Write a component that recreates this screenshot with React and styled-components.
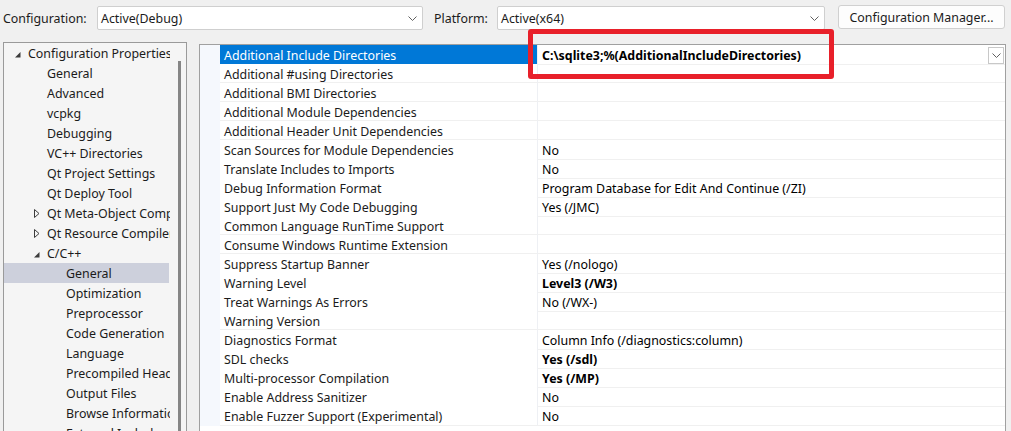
import styled, { createGlobalStyle } from "styled-components";

const GlobalStyle = createGlobalStyle`
  html, body {
    margin: 0;
    padding: 0;
    background: #f0f0f0;
  }
  body {
    font-family: "Noto Sans", "Open Sans", sans-serif;
    font-size: 12.4px;
    color: #1b1b1b;
  }
`;

const Page = styled.div`
  position: relative;
  width: 1011px;
  height: 431px;
  overflow: hidden;
  display: flex;
  flex-direction: column;
  background: #f0f0f0;
`;

const Toolbar = styled.div`
  height: 36px;
  display: flex;
  align-items: center;
  padding-left: 3px;
  flex-shrink: 0;
`;

const Label = styled.span`
  width: ${(p) => p.$width}px;
  flex-shrink: 0;
  white-space: nowrap;
  margin-left: ${(p) => p.$offset || 0}px;
`;

const Combo = styled.div`
  width: ${(p) => p.$width}px;
  height: 24px;
  box-sizing: border-box;
  display: flex;
  align-items: center;
  justify-content: space-between;
  padding: 0 5px 0 3px;
  background: #fff;
  border: 1px solid #cfcfcf;
  border-radius: 2px;
  flex-shrink: 0;
`;

const ToolButton = styled.button`
  margin-left: 13px;
  width: 167px;
  height: 24px;
  margin-top: -2px;
  background: #fdfdfd;
  border: 1px solid #d0d0d0;
  border-radius: 3px;
  font: inherit;
  color: inherit;
  padding: 0;
`;

const Body = styled.div`
  flex: 1;
  min-height: 0;
  display: flex;
  align-items: flex-start;
  padding-top: 6px;
`;

const TreePanel = styled.div`
  margin-left: 3px;
  width: 184px;
  height: 400px;
  box-sizing: border-box;
  border: 1px solid #9a9a9a;
  border-bottom: none;
  background: #f5f5f5;
  display: flex;
`;

const TreeList = styled.div`
  flex: 1;
  min-width: 0;
  overflow: hidden;
`;

const TreeRow = styled.div`
  height: 20px;
  display: flex;
  align-items: center;
  padding-left: ${(p) => 11 + p.$level * 19}px;
  white-space: nowrap;
  margin-right: 1px;
  background: ${(p) => (p.$selected ? "#cdd0dc" : "transparent")};
`;

const Twisty = styled.span`
  width: 13px;
  flex-shrink: 0;
  display: flex;
  align-items: center;
`;

const ScrollTrack = styled.div`
  width: 16px;
  flex-shrink: 0;
  display: flex;
  justify-content: center;
  padding-top: 18px;
  box-sizing: border-box;
`;

const ScrollThumb = styled.div`
  width: 3px;
  height: 100%;
  margin-left: 2px;
  background: #868686;
`;

const Grid = styled.div`
  margin-left: 12px;
  margin-top: 2px;
  width: 807px;
  height: 400px;
  box-sizing: border-box;
  border: 1px solid #a0a0a0;
  border-bottom: none;
  background: #fff;
`;

const PropRow = styled.div`
  display: grid;
  grid-template-columns: 20px 318px 1fr;
  height: 19px;
`;

const Gutter = styled.div`
  background: #f5f8fd;
`;

const NameCell = styled.div`
  box-sizing: border-box;
  padding: 2px 0 0 4px;
  display: flex;
  align-items: center;
  white-space: nowrap;
  overflow: hidden;
  border-bottom: 1px solid #f0f0f0;
  border-right: 1px solid #eef0f4;
  background: ${(p) => (p.$selected ? "#0078d7" : "#fff")};
  color: ${(p) => (p.$selected ? "#fff" : "#1b1b1b")};
`;

const ValueCell = styled.div`
  box-sizing: border-box;
  padding: 2px 1px 0 4px;
  display: flex;
  align-items: center;
  justify-content: space-between;
  white-space: nowrap;
  border-bottom: 1px solid #f0f0f0;
  font-weight: ${(p) => (p.$bold ? 700 : 400)};
  color: #000;
`;

const DropButton = styled.div`
  width: 16px;
  height: 17px;
  box-sizing: border-box;
  border: 1px solid #c8c8c8;
  background: #fff;
  display: flex;
  align-items: center;
  justify-content: center;
`;

const Highlight = styled.div`
  position: absolute;
  left: 528px;
  top: 29px;
  width: 306px;
  height: 50px;
  box-sizing: border-box;
  border: 5px solid #e8202a;
  border-radius: 3px;
  pointer-events: none;
`;

const Chevron = () => (
  <svg width="9" height="5" viewBox="0 0 9 5">
    <path d="M0.5 0.5 L4.5 4.5 L8.5 0.5" fill="none" stroke="#606060" strokeWidth="1" />
  </svg>
);

const Expanded = () => (
  <svg width="6" height="6" viewBox="0 0 6 6" style={{ marginTop: 4 }}>
    <polygon points="5.5,0 5.5,5.5 0,5.5" fill="#3c3c3c" />
  </svg>
);

const Collapsed = () => (
  <svg width="6" height="9" viewBox="0 0 6 9">
    <path d="M0.5 0.5 L5 4.5 L0.5 8.5 Z" fill="none" stroke="#3c3c3c" strokeWidth="1" />
  </svg>
);

const tree = [
  { label: "Configuration Properties", level: 0, state: "open" },
  { label: "General", level: 1 },
  { label: "Advanced", level: 1 },
  { label: "vcpkg", level: 1 },
  { label: "Debugging", level: 1 },
  { label: "VC++ Directories", level: 1 },
  { label: "Qt Project Settings", level: 1 },
  { label: "Qt Deploy Tool", level: 1 },
  { label: "Qt Meta-Object Compiler", level: 1, state: "closed" },
  { label: "Qt Resource Compiler", level: 1, state: "closed" },
  { label: "C/C++", level: 1, state: "open" },
  { label: "General", level: 2, selected: true },
  { label: "Optimization", level: 2 },
  { label: "Preprocessor", level: 2 },
  { label: "Code Generation", level: 2 },
  { label: "Language", level: 2 },
  { label: "Precompiled Headers", level: 2 },
  { label: "Output Files", level: 2 },
  { label: "Browse Information", level: 2 },
  { label: "External Includes", level: 2 },
];

const props = [
  { name: "Additional Include Directories", value: "C:\\sqlite3;%(AdditionalIncludeDirectories)", bold: true, selected: true },
  { name: "Additional #using Directories", value: "" },
  { name: "Additional BMI Directories", value: "" },
  { name: "Additional Module Dependencies", value: "" },
  { name: "Additional Header Unit Dependencies", value: "" },
  { name: "Scan Sources for Module Dependencies", value: "No" },
  { name: "Translate Includes to Imports", value: "No" },
  { name: "Debug Information Format", value: "Program Database for Edit And Continue (/ZI)" },
  { name: "Support Just My Code Debugging", value: "Yes (/JMC)" },
  { name: "Common Language RunTime Support", value: "" },
  { name: "Consume Windows Runtime Extension", value: "" },
  { name: "Suppress Startup Banner", value: "Yes (/nologo)" },
  { name: "Warning Level", value: "Level3 (/W3)", bold: true },
  { name: "Treat Warnings As Errors", value: "No (/WX-)" },
  { name: "Warning Version", value: "" },
  { name: "Diagnostics Format", value: "Column Info (/diagnostics:column)" },
  { name: "SDL checks", value: "Yes (/sdl)", bold: true },
  { name: "Multi-processor Compilation", value: "Yes (/MP)", bold: true },
  { name: "Enable Address Sanitizer", value: "No" },
  { name: "Enable Fuzzer Support (Experimental)", value: "No" },
];

export default function App() {
  return (
    <Page>
      <GlobalStyle />
      <Toolbar>
        <Label $width={94}>Configuration:</Label>
        <Combo $width={326}>
          <span>Active(Debug)</span>
          <Chevron />
        </Combo>
        <Label $width={63} $offset={11}>Platform:</Label>
        <Combo $width={328}>
          <span>Active(x64)</span>
          <Chevron />
        </Combo>
        <ToolButton>Configuration Manager...</ToolButton>
      </Toolbar>
      <Body>
        <TreePanel>
          <TreeList>
            {tree.map((item, i) => (
              <TreeRow key={i} $level={item.level} $selected={item.selected}>
                <Twisty>
                  {item.state === "open" && <Expanded />}
                  {item.state === "closed" && <Collapsed />}
                </Twisty>
                {item.label}
              </TreeRow>
            ))}
          </TreeList>
          <ScrollTrack>
            <ScrollThumb />
          </ScrollTrack>
        </TreePanel>
        <Grid>
          {props.map((p, i) => (
            <PropRow key={i}>
              <Gutter />
              <NameCell $selected={p.selected}>{p.name}</NameCell>
              <ValueCell $bold={p.bold}>
                <span>{p.value}</span>
                {p.selected && (
                  <DropButton>
                    <Chevron />
                  </DropButton>
                )}
              </ValueCell>
            </PropRow>
          ))}
        </Grid>
      </Body>
      <Highlight />
    </Page>
  );
}
